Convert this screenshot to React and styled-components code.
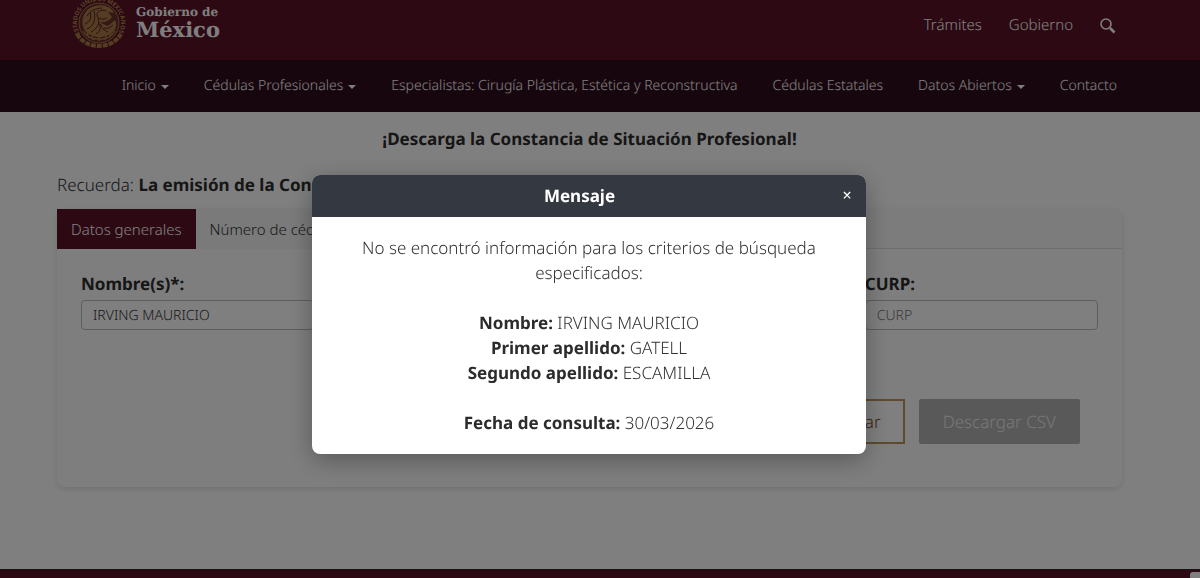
import React from 'react';
import styled, { createGlobalStyle } from 'styled-components';

const GlobalStyle = createGlobalStyle`
  * {
    box-sizing: border-box;
  }

  body {
    margin: 0;
    font-family: 'Noto Sans', sans-serif;
    font-size: 17px;
    font-weight: 300;
    line-height: 25px;
    text-rendering: geometricPrecision;
    color: #333;
    background: #fff;
  }

  a {
    color: inherit;
    text-decoration: none;
  }

  strong {
    font-weight: 700;
    color: #2c2c2c;
  }
`;

const Page = styled.div`
  display: flex;
  flex-direction: column;
  height: 100vh;
  overflow: hidden;
`;

const Header = styled.header`
  display: flex;
  flex: none;
  align-items: center;
  justify-content: space-between;
  height: 60px;
  padding: 0 84px 14px 72px;
  background: #5a1226;
`;

const Brand = styled.a`
  display: flex;
  align-items: center;
  gap: 10px;
  color: #fff;
`;

const BrandName = styled.span`
  display: flex;
  flex-direction: column;
  font-family: 'DejaVu Serif', serif;
  font-size: 12px;
  font-weight: 700;
  line-height: 14px;
`;

const Country = styled.span`
  font-size: 21px;
  line-height: 22px;
`;

const TopLinks = styled.nav`
  display: flex;
  align-items: center;
  gap: 27px;
  padding-top: 5px;
  font-size: 15px;
  color: #fff;
`;

const IconButton = styled.button`
  display: flex;
  padding: 0;
  border: 0;
  color: inherit;
  background: none;
`;

const MainNav = styled.nav`
  display: flex;
  flex: none;
  align-items: center;
  justify-content: flex-end;
  gap: 35px;
  height: 52px;
  padding: 0 83px 1px;
  font-size: 14px;
  color: #fff;
  background: #300c1c;
  white-space: nowrap;
`;

const NavLink = styled.a`
  display: flex;
  align-items: center;
  gap: 5px;
`;

const Caret = styled.span`
  margin-top: 3px;
  border-top: 4px solid;
  border-right: 4px solid transparent;
  border-left: 4px solid transparent;
`;

const Main = styled.main`
  flex: 1;
  padding: 14px 78px 0 57px;
`;

const Title = styled.h1`
  margin: 0 0 21px;
  font-size: 17px;
  line-height: 25px;
  text-align: center;
  color: #2c2c2c;
`;

const Reminder = styled.p`
  margin: 0 0 12px;
`;

const Panel = styled.section`
  border-radius: 8px;
  background: #fdfdfd;
  box-shadow: 0 2px 6px rgba(0, 0, 0, 0.12);
`;

const Tabs = styled.div`
  display: flex;
  height: 40px;
  border-bottom: 1px solid #ddd;
  border-radius: 0 8px 0 0;
  background: #f9f9f9;
`;

const Tab = styled.button`
  height: 40px;
  padding: 0 14px;
  border: 0;
  font: inherit;
  font-size: 15px;
  color: ${({ $active }) => ($active ? '#fff' : '#333')};
  background: ${({ $active }) => ($active ? '#5a1226' : '#f4f4f4')};
`;

const Form = styled.form`
  padding: 22px 24px 43px;
`;

const Fields = styled.div`
  display: grid;
  grid-template-columns: repeat(4, 1fr);
  gap: 28px;
  margin-bottom: 69px;
`;

const Field = styled.label`
  display: flex;
  flex-direction: column;
  gap: 4px;
  font-weight: 700;
  color: #2c2c2c;
`;

const Input = styled.input`
  width: 100%;
  height: 30px;
  padding: 0 11px;
  border: 1px solid #bbb;
  border-radius: 4px;
  font: 300 14px 'Noto Sans', sans-serif;
  text-rendering: inherit;
  color: #333;
  background: #fff;

  &::placeholder {
    color: #777;
    opacity: 1;
  }
`;

const Actions = styled.div`
  display: flex;
  justify-content: flex-end;
  gap: 14px;
  padding-right: 18px;
`;

const Button = styled.button`
  height: 45px;
  padding: 0 22px;
  border: 2px solid #bc955c;
  font: inherit;
  text-rendering: inherit;
  color: #6f4f24;
  background: #fff;

  &:disabled {
    border-color: #b2b2b2;
    border-radius: 2px;
    color: #eee;
    background: #b2b2b2;
  }
`;

const Footer = styled.footer`
  display: flex;
  flex: none;
  justify-content: flex-end;
  height: 9px;
  padding-top: 2px;
  border-top: 1px solid #34202a;
  background: #5a1226;
`;

const Corner = styled.span`
  width: 10px;
  border-radius: 3px 0 0;
  background: #fff;
`;

const Backdrop = styled.div`
  position: fixed;
  inset: 0;
  display: flex;
  align-items: flex-start;
  justify-content: center;
  padding: 175px 22px 0 0;
  background: rgba(0, 0, 0, 0.5);
`;

const Dialog = styled.div`
  width: 47%;
  min-width: 554px;
  overflow: hidden;
  border-radius: 8px;
  background: #fff;
  box-shadow: 0 6px 24px rgba(0, 0, 0, 0.3);
`;

const DialogHeader = styled.div`
  display: grid;
  grid-template-columns: 1fr 16px;
  align-items: center;
  height: 42px;
  padding: 0 11px 2px 8px;
  color: #fff;
  background: #343841;
`;

const DialogTitle = styled.h2`
  margin: 0;
  font-size: 17px;
  text-align: center;
`;

const Close = styled.button`
  padding: 0;
  border: 0;
  font: 400 16px 'Noto Sans', sans-serif;
  color: inherit;
  background: none;
`;

const DialogBody = styled.div`
  padding: 18px 40px 19px;
  text-align: center;

  p {
    margin: 0 0 25px;
  }

  p:last-child {
    margin: 0;
  }
`;

const Seal = () => (
  <svg width="54" height="54" viewBox="0 0 54 54" fill="none" stroke="#a87a45" aria-hidden="true">
    <defs>
      <path id="seal-ring" d="M8 38 A22 22 0 1 1 46 38" />
    </defs>
    <circle cx="27" cy="27" r="20" fill="#67302a" strokeWidth="1" />
    <text fill="#b58a50" stroke="none" fontFamily="Noto Sans" fontSize="6" fontWeight="700">
      <textPath href="#seal-ring">ESTADOS UNIDOS MEXICANOS</textPath>
    </text>
    <path d="M5 38c9 16 35 16 44 0" strokeWidth="4" strokeDasharray="5 1" />
    {/* eagle: spread wing, neck and tail */}
    <path
      d="M11 30c-2-8 2-16 9-19 9-4 19-1 22 6l-6-1 4 5c-3 4-8 6-13 5l9 4 7-6c3 6 0 11-5 14-7 4-14 4-19 1-5-2-7-5-8-9z"
      fill="#a87a45"
      stroke="none"
    />
    <path
      d="M13 28c5-2 7-6 5-12M15 33c7-3 9-10 7-18M19 36c7-4 9-9 7-14M24 38c5-3 5-7 3-11M34 15c-5-2-9 0-9 4s6 5 10 3M30 12c-6 0-12 3-15 8M36 36c-4-2-7-4-7-8M41 29c-3 3-6 4-9 3"
      stroke="#54222a"
      strokeWidth="1"
    />
    {/* nopal and laurel under the eagle */}
    <path d="M11 35c6 11 26 11 32 0M15 37l2 5M20 40l1 4M27 39v6M34 40l-1 4M39 37l-2 5" strokeWidth="1.5" />
  </svg>
);

const SearchIcon = () => (
  <svg width="16" height="16" viewBox="0 0 16 16" fill="none" stroke="currentColor" aria-hidden="true">
    <circle cx="6" cy="6" r="5" strokeWidth="1.6" />
    <path d="M10 10l4.5 4.5" strokeWidth="2.6" />
  </svg>
);

const navItems = [
  { label: 'Inicio', menu: true },
  { label: 'Cédulas Profesionales', menu: true },
  { label: 'Especialistas: Cirugía Plástica, Estética y Reconstructiva' },
  { label: 'Cédulas Estatales' },
  { label: 'Datos Abiertos', menu: true },
  { label: 'Contacto' },
];

const fields = [
  { label: 'Nombre(s)*:', placeholder: 'Nombre(s)', value: 'IRVING MAURICIO' },
  { label: 'Primer apellido*:', placeholder: 'Primer apellido', value: 'GATELL' },
  { label: 'Segundo apellido:', placeholder: 'Segundo apellido', value: 'ESCAMILLA' },
  { label: 'CURP:', placeholder: 'CURP' },
];

const App = () => (
  <>
    <GlobalStyle />
    <Page>
      <Header>
        <Brand href="#">
          <Seal />
          <BrandName>
            Gobierno de
            <Country>México</Country>
          </BrandName>
        </Brand>
        <TopLinks>
          <a href="#tramites">Trámites</a>
          <a href="#gobierno">Gobierno</a>
          <IconButton type="button" aria-label="Buscar">
            <SearchIcon />
          </IconButton>
        </TopLinks>
      </Header>

      <MainNav>
        {navItems.map(({ label, menu }) => (
          <NavLink key={label} href="#">
            {label}
            {menu && <Caret />}
          </NavLink>
        ))}
      </MainNav>

      <Main>
        <Title>¡Descarga la Constancia de Situación Profesional!</Title>
        <Reminder>
          Recuerda: <strong>La emisión de la Constancia es gratuita.</strong>
        </Reminder>
        <Panel>
          <Tabs role="tablist">
            <Tab type="button" role="tab" aria-selected="true" $active>
              Datos generales
            </Tab>
            <Tab type="button" role="tab" aria-selected="false">
              Número de cédula
            </Tab>
          </Tabs>
          <Form>
            <Fields>
              {fields.map(({ label, placeholder, value }) => (
                <Field key={label}>
                  {label}
                  <Input type="text" placeholder={placeholder} defaultValue={value} />
                </Field>
              ))}
            </Fields>
            <Actions>
              <Button type="button">Limpiar</Button>
              <Button type="button" disabled>
                Descargar CSV
              </Button>
            </Actions>
          </Form>
        </Panel>
      </Main>

      <Footer>
        <Corner />
      </Footer>
    </Page>

    <Backdrop>
      <Dialog role="dialog" aria-modal="true" aria-labelledby="dialog-title">
        <DialogHeader>
          <DialogTitle id="dialog-title">Mensaje</DialogTitle>
          <Close type="button" aria-label="Cerrar">
            ×
          </Close>
        </DialogHeader>
        <DialogBody>
          <p>No se encontró información para los criterios de búsqueda especificados:</p>
          <p>
            <strong>Nombre:</strong> IRVING MAURICIO
            <br />
            <strong>Primer apellido:</strong> GATELL
            <br />
            <strong>Segundo apellido:</strong> ESCAMILLA
          </p>
          <p>
            <strong>Fecha de consulta:</strong> 30/03/2026
          </p>
        </DialogBody>
      </Dialog>
    </Backdrop>
  </>
);

export default App;
